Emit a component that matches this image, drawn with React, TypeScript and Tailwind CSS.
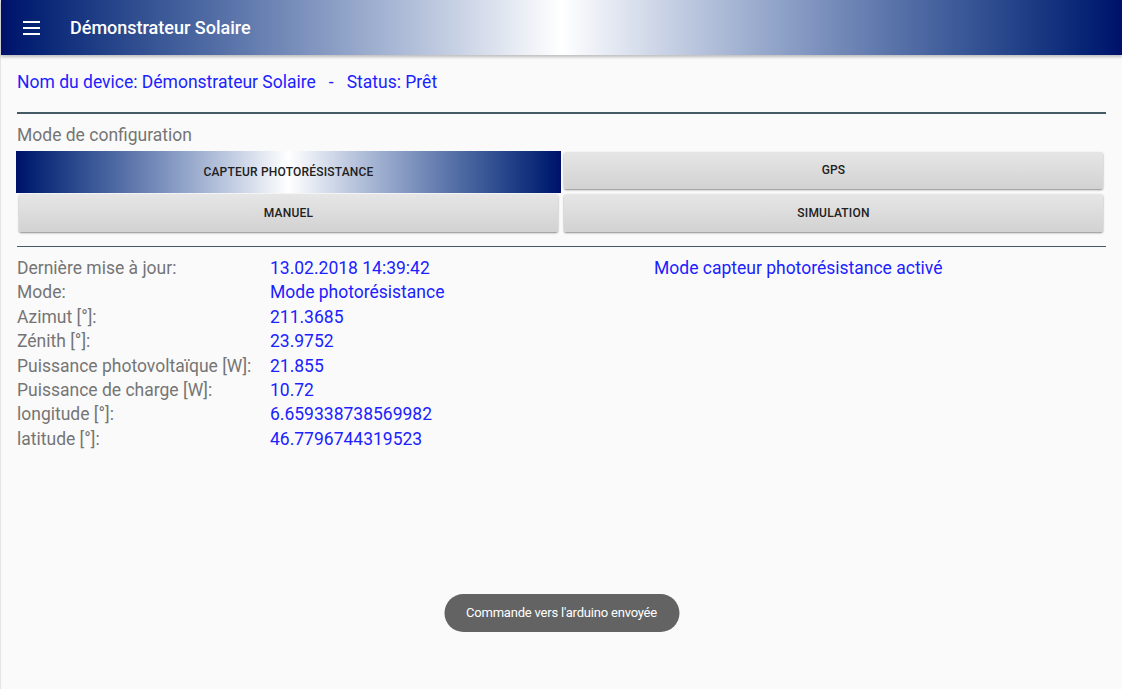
import React from "react";

const rows: [string, string][] = [
  ["Dernière mise à jour:", "13.02.2018 14:39:42"],
  ["Mode:", "Mode photorésistance"],
  ["Azimut [°]:", "211.3685"],
  ["Zénith [°]:", "23.9752"],
  ["Puissance photovoltaïque [W]:", "21.855"],
  ["Puissance de charge [W]:", "10.72"],
  ["longitude [°]:", "6.659338738569982"],
  ["latitude [°]:", "46.7796744319523"],
];

function PlainButton({ label }: { label: string }) {
  return (
    <div className="px-[3px] pt-[1px] pb-[4px] h-full">
      <div className="h-full flex items-center justify-center rounded-[2px] bg-linear-to-b from-[#e6e6e6] to-[#d2d2d2] shadow-[0_1px_2px_rgba(0,0,0,0.45)] text-[12px] font-medium text-[#212121] tracking-[0.2px]">
        {label}
      </div>
    </div>
  );
}

export default function App() {
  return (
    <div
      className="relative min-h-[689px] bg-[#fafafa] border-l border-[#e4e4e4]"
      style={{ fontFamily: "Roboto, 'Noto Sans', sans-serif" }}
    >
      <header className="h-[55px] flex items-center bg-linear-to-r from-[#00106a] via-white to-[#00106a] shadow-[0_2px_3px_rgba(0,0,0,0.25)]">
        <div className="ml-[22px] w-[17px] flex flex-col gap-[4px]">
          <span className="block h-[2px] bg-white" />
          <span className="block h-[2px] bg-white" />
          <span className="block h-[2px] bg-white" />
        </div>
        <h1 className="ml-[30px] text-[18px] font-medium text-white">Démonstrateur Solaire</h1>
      </header>

      <main className="px-[16px]">
        <p className="pt-[17px] text-[17.5px] leading-[20px] text-[#1a22ff] whitespace-pre">
          Nom du device: Démonstrateur Solaire   -   Status: Prêt
        </p>

        <div className="mt-[20px] h-[1.5px] bg-[#455a64]" />

        <p className="mt-[11px] text-[17.5px] leading-[20px] text-[#757575]">Mode de configuration</p>

        <div className="mt-[6px] ml-[-1px] w-[1090px] grid grid-cols-2 grid-rows-[42px_43px]">
          <div className="flex items-center justify-center bg-linear-to-r from-[#00106a] via-white to-[#00106a] text-[12px] font-medium text-[#212121] tracking-[0.2px]">
            CAPTEUR PHOTORÉSISTANCE
          </div>
          <PlainButton label="GPS" />
          <PlainButton label="MANUEL" />
          <PlainButton label="SIMULATION" />
        </div>

        <div className="mt-[10px] h-[1.5px] bg-[#455a64]" />

        <div className="mt-[9px] grid grid-cols-[253px_384px_1fr] text-[17.5px] leading-[24.4px]">
          <div>
            {rows.map(([l]) => (
              <div key={l} className="text-[#757575] whitespace-nowrap">{l}</div>
            ))}
          </div>
          <div>
            {rows.map(([l, v]) => (
              <div key={l} className="text-[#1a22ff] whitespace-nowrap">{v}</div>
            ))}
          </div>
          <div className="text-[#1a22ff]">Mode capteur photorésistance activé</div>
        </div>
      </main>

      <div className="absolute left-1/2 -translate-x-1/2 top-[594px] h-[38px] px-[22px] flex items-center rounded-full bg-[#636363] text-white text-[13px] tracking-[-0.2px] whitespace-nowrap">
        Commande vers l'arduino envoyée
      </div>
    </div>
  );
}
